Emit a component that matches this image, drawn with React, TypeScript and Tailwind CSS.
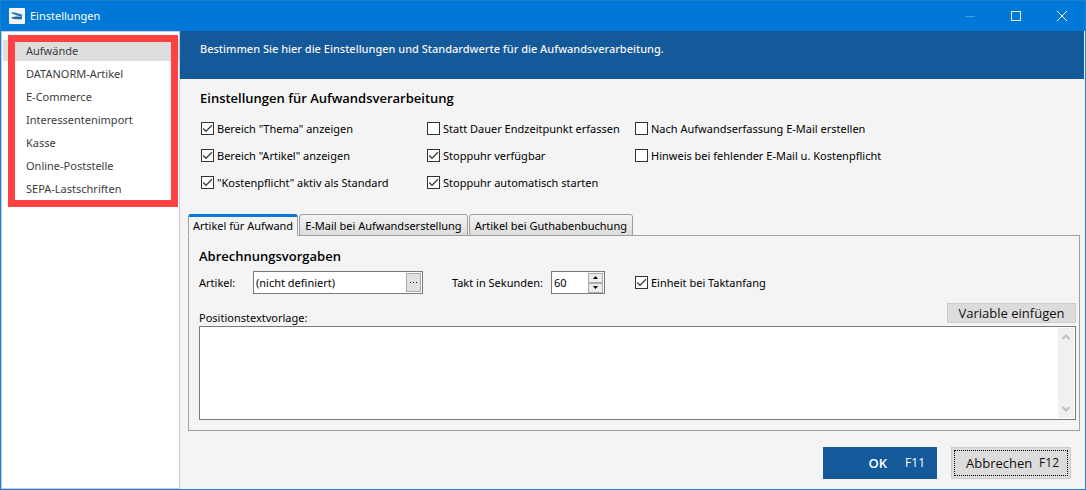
import React, { useState } from 'react';
import clsx from 'clsx';

const categories = [
  'Aufwände',
  'DATANORM-Artikel',
  'E-Commerce',
  'Interessentenimport',
  'Kasse',
  'Online-Poststelle',
  'SEPA-Lastschriften'
];

const tabs = ['Artikel für Aufwand', 'E-Mail bei Aufwandserstellung', 'Artikel bei Guthabenbuchung'];

// One entry per column of the option grid
const options = [
  [
    { label: 'Bereich "Thema" anzeigen', checked: true },
    { label: 'Bereich "Artikel" anzeigen', checked: true },
    { label: '"Kostenpflicht" aktiv als Standard', checked: true }
  ],
  [
    { label: 'Statt Dauer Endzeitpunkt erfassen', checked: false },
    { label: 'Stoppuhr verfügbar', checked: true },
    { label: 'Stoppuhr automatisch starten', checked: true }
  ],
  [
    { label: 'Nach Aufwandserfassung E-Mail erstellen', checked: false },
    { label: 'Hinweis bei fehlender E-Mail u. Kostenpflicht', checked: false }
  ]
];

const CheckBox: React.FC<{ label: string; checked: boolean }> = ({ label, checked }) => (
  <label className="flex items-center gap-[3px] whitespace-nowrap">
    <span className="relative size-[13px] shrink-0">
      <input
        type="checkbox"
        defaultChecked={checked}
        className="peer block size-[13px] appearance-none border border-[#333333] bg-white"
      />
      <svg
        viewBox="0 0 13 13"
        className="pointer-events-none absolute inset-0 hidden size-[13px] peer-checked:block"
        fill="none"
        stroke="#404040"
        strokeWidth="1.3"
      >
        <path d="M2.2 6.5 5 9.3 11 3.3" />
      </svg>
    </span>
    {label}
  </label>
);

// Title bar with logo and window controls
const TitleBar: React.FC = () => (
  <header className="flex h-[30px] shrink-0 items-center bg-[#0078d7] text-white">
    <svg viewBox="0 0 16 16" className="ml-2 size-4" aria-hidden="true">
      <rect width="16" height="16" rx="1" fill="#f4f6f8" />
      <path d="M2.5 4.2 6 4.6l7 2v1.8L9.5 8 2.5 5.4z" fill="#2d7ab5" />
      <path d="M2.5 9.2 7 8.6h6v2.6H6.5l-4-1z" fill="#2369a6" />
    </svg>
    <h1 className="ml-[5px] flex-1">Einstellungen</h1>
    <button aria-label="Minimieren" className="flex h-full w-[46px] items-center justify-center opacity-25">
      <svg viewBox="0 0 10 10" className="size-2.5" stroke="currentColor"><path d="M0 5.5h10" /></svg>
    </button>
    <button aria-label="Maximieren" className="flex h-full w-[46px] items-center justify-center">
      <svg viewBox="0 0 10 10" className="size-2.5" fill="none" stroke="currentColor"><path d="M.5.5h9v9h-9z" /></svg>
    </button>
    <button aria-label="Schließen" className="flex h-full w-[46px] items-center justify-center">
      <svg viewBox="0 0 10 10" className="size-2.5" stroke="currentColor"><path d="m0 0 10 10M10 0 0 10" /></svg>
    </button>
  </header>
);

const Sidebar: React.FC = () => (
  <nav className="relative w-[179px] shrink-0 border border-[#c9cbe6] bg-white pt-2 text-[#3c3c3c]">
    <ul className="flex flex-col gap-0.5 pl-px">
      {categories.map((name, index) => (
        <li key={name}>
          <a
            href="#"
            className={clsx('flex h-[21px] items-center pl-[23px]', index === 0 && 'bg-[#dedede]')}
          >
            {name}
          </a>
        </li>
      ))}
    </ul>
    <div className="pointer-events-none absolute top-[3px] right-px left-1.5 h-[172px] border-7 border-[#ff4141]" />
  </nav>
);

const TabBar: React.FC<{ active: number; onSelect: (index: number) => void }> = ({ active, onSelect }) => (
  <div role="tablist" className="relative -mb-px flex gap-px">
    {tabs.map((tab, index) => (
      <button
        key={tab}
        role="tab"
        aria-selected={index === active}
        onClick={() => onSelect(index)}
        className={clsx(
          'flex h-[22px] items-center rounded-t-[3px] border whitespace-nowrap',
          index === active
            ? 'border-x-[#a0a0a0] border-t-3 border-t-[#0078d7] border-b-[#f4f4f4] bg-[#f4f4f4] px-1'
            : 'border-[#a0a0a0] bg-linear-to-b from-[#f4f4f4] to-[#dcdcdc] px-[5px] pt-0.5'
        )}
      >
        {tab}
      </button>
    ))}
  </div>
);

const Spinner: React.FC = () => {
  const [value, setValue] = useState(60);
  const arrow = 'flex h-2.5 w-[15px] items-center justify-center border border-[#acacac] bg-[#ececec]';

  return (
    <div className="flex h-[23px] w-[54px] items-center border border-[#7a7a7a] bg-white pr-px">
      <input
        id="takt"
        value={value}
        onChange={(e) => setValue(Number(e.target.value) || 0)}
        className="w-0 flex-1 pl-0.5 outline-none"
      />
      <div className="flex flex-col">
        <button aria-label="Erhöhen" className={arrow} onClick={() => setValue(value + 1)}>
          <svg viewBox="0 0 5 3" className="h-[3px] w-[5px]"><path d="M0 3 2.5 0 5 3z" /></svg>
        </button>
        <button aria-label="Verringern" className={arrow} onClick={() => setValue(value - 1)}>
          <svg viewBox="0 0 5 3" className="h-[3px] w-[5px]"><path d="M0 0 2.5 3 5 0z" /></svg>
        </button>
      </div>
    </div>
  );
};

const BillingPanel: React.FC = () => (
  <section className="flex flex-1 flex-col border border-[#a0a0a0] pt-[11px] pr-[3px] pb-2.5 pl-2.5">
    <h3 className="font-['Open_Sans',sans-serif] text-[13px] leading-[18px] font-semibold">Abrechnungsvorgaben</h3>

    <div className="mt-1.5 flex items-center">
      <label htmlFor="artikel" className="w-[54px]">Artikel:</label>
      <div className="flex h-[23px] w-[170px] items-center border border-[#7a7a7a] bg-white pr-px">
        <input id="artikel" defaultValue="(nicht definiert)" className="w-0 flex-1 pl-0.5 outline-none" />
        <button
          aria-label="Artikel auswählen"
          className="flex h-[19px] w-[15px] items-center justify-center border border-[#acacac] bg-[#e1e1e1]"
        >
          <svg viewBox="0 0 7 1" className="h-px w-[7px]">
            <path d="M0 0h1v1H0zM3 0h1v1H3zM6 0h1v1H6z" />
          </svg>
        </button>
      </div>
      <label htmlFor="takt" className="w-[128px] pr-2 text-right whitespace-nowrap">Takt in Sekunden:</label>
      <Spinner />
      <div className="ml-[30px]">
        <CheckBox label="Einheit bei Taktanfang" checked />
      </div>
    </div>

    <div className="mt-[9px] flex items-end justify-between">
      <label htmlFor="vorlage" className="leading-[10px]">Positionstextvorlage:</label>
      <button className="h-5 w-[129px] border border-[#cccccc] bg-[#dcdcdc] font-['Open_Sans',sans-serif] text-[13px] leading-[18px] font-medium whitespace-nowrap text-[#111111]">
        Variable einfügen
      </button>
    </div>

    <div className="mt-[3px] flex flex-1 border border-[#7a7a7a] bg-white p-px">
      <textarea id="vorlage" className="min-h-0 flex-1 resize-none px-0.5 outline-none" />
      {/* Disabled scroll bar */}
      <div className="flex w-4 flex-col items-center justify-between bg-[#f0f0f0] py-1.5">
        <svg viewBox="0 0 8 6" className="h-1.5 w-2" fill="none" stroke="#bfbfbf" strokeWidth="2">
          <path d="M.5 5 4 1.5 7.5 5" />
        </svg>
        <svg viewBox="0 0 8 6" className="h-1.5 w-2" fill="none" stroke="#bfbfbf" strokeWidth="2">
          <path d="M.5 1 4 4.5 7.5 1" />
        </svg>
      </div>
    </div>
  </section>
);

const App: React.FC = () => {
  const [activeTab, setActiveTab] = useState(0);

  return (
    <div className="flex min-h-screen flex-col border border-[#1a80d2] bg-[#f4f4f4] font-['Noto_Sans',sans-serif] text-[11px] leading-4 text-black">
      <TitleBar />
      <div className="flex flex-1">
        <Sidebar />
        <main className="flex min-w-0 flex-1 flex-col">
          <p className="mr-px flex h-12 items-center bg-[#14599a] pb-3 pl-5 font-medium text-[#f4f4f4]">
            Bestimmen Sie hier die Einstellungen und Standardwerte für die Aufwandsverarbeitung.
          </p>

          <h2 className="mt-2.5 ml-5 font-['Open_Sans',sans-serif] text-[13px] leading-[18px] font-semibold">
            Einstellungen für Aufwandsverarbeitung
          </h2>

          <div className="mt-2 ml-[21px] grid grid-cols-[226px_208px_1fr]">
            {options.map((column, index) => (
              <div key={index} className="grid auto-rows-[27px] content-start">
                {column.map((option) => (
                  <CheckBox key={option.label} {...option} />
                ))}
              </div>
            ))}
          </div>

          <div className="mt-[18px] mr-[5px] ml-2 flex flex-1 flex-col">
            <TabBar active={activeTab} onSelect={setActiveTab} />
            <BillingPanel />
          </div>

          <footer className="flex justify-end gap-3.5 pt-4 pr-3.5 pb-2.5 font-['Open_Sans',sans-serif] text-[12px]">
            <button className="flex h-8 w-[114px] items-center justify-end gap-[18px] bg-[#14599a] pr-3 text-white">
              <span className="text-[13px] font-semibold">OK</span>
              <span>F11</span>
            </button>
            <button className="h-8 w-[120px] border border-[#cccccc] bg-[#dcdcdc] p-0.5 text-[#111111]">
              <span className="flex h-full items-center justify-between border border-dotted border-black pr-2 pl-[11px]">
                <span className="text-[13px] font-medium">Abbrechen</span>
                <span>F12</span>
              </span>
            </button>
          </footer>
        </main>
      </div>
    </div>
  );
};

export default App;
